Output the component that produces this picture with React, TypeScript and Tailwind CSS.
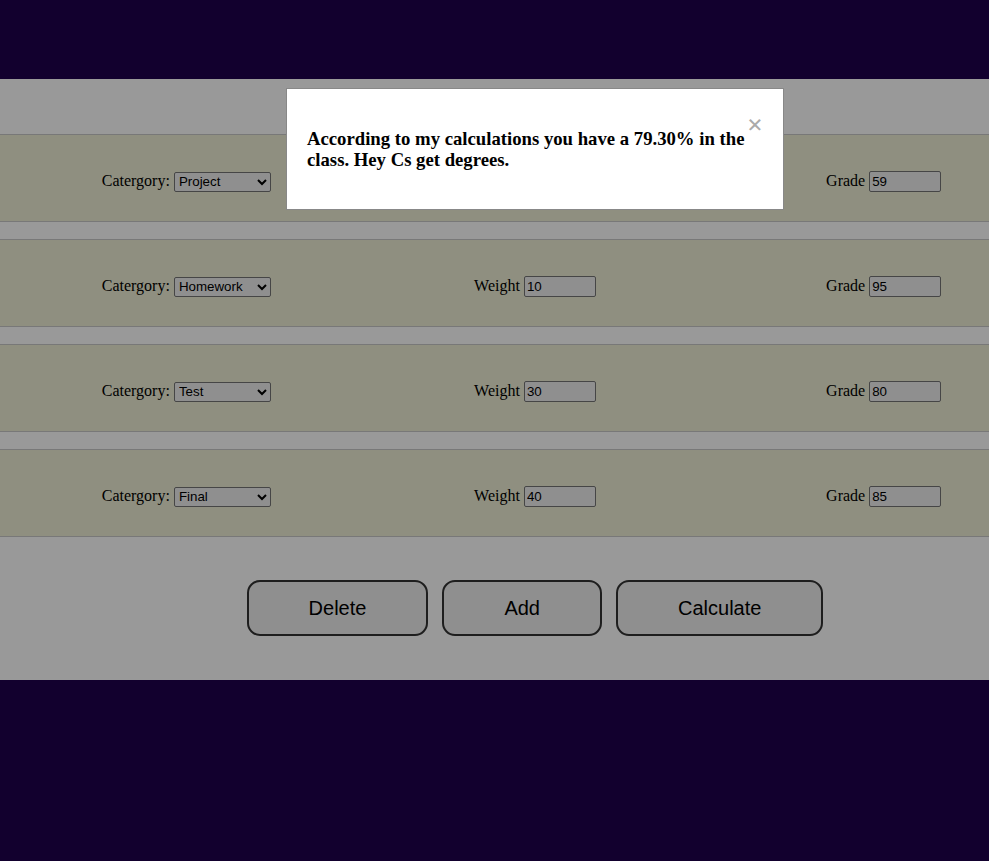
import { useState } from 'react';

type Row = { category: string; weight: string; grade: string };

const categories = ['Homework', 'Project', 'Test', 'Quiz', 'Final'];

const initialRows: Row[] = [
  { category: 'Project', weight: '20', grade: '59' },
  { category: 'Homework', weight: '10', grade: '95' },
  { category: 'Test', weight: '30', grade: '80' },
  { category: 'Final', weight: '40', grade: '85' },
];

function GradeRow({ row }: { row: Row }) {
  return (
    <div className="grid h-[88px] grid-cols-3 items-center border-y border-[#c8c8c8] bg-[#eeeed6] px-[12px] pt-[6px] font-['Liberation_Serif',serif] text-[16px] text-black">
      <div className="flex items-baseline justify-center gap-[4px]">
        <span>Catergory:</span>
        <select
          defaultValue={row.category}
          className="h-[20px] w-[97px] rounded-[2px] border border-[#767676] bg-[#efefef] font-['Liberation_Sans',sans-serif] text-[13.33px] text-black"
        >
          {categories.map((c) => (
            <option key={c}>{c}</option>
          ))}
        </select>
      </div>
      <div className="flex items-baseline justify-center gap-[4px]">
        <span>Weight</span>
        <input
          defaultValue={row.weight}
          className="h-[21px] w-[72px] rounded-[2px] border border-[#767676] bg-[#efefef] px-[2px] font-['Liberation_Sans',sans-serif] text-[13.33px] text-black"
        />
      </div>
      <div className="flex items-baseline justify-center gap-[4px]">
        <span>Grade</span>
        <input
          defaultValue={row.grade}
          className="h-[21px] w-[72px] rounded-[2px] border border-[#767676] bg-[#efefef] px-[2px] font-['Liberation_Sans',sans-serif] text-[13.33px] text-black"
        />
      </div>
    </div>
  );
}

export default function App() {
  const [rows] = useState(initialRows);
  const [open, setOpen] = useState(true);

  return (
    <div className="relative min-h-screen overflow-hidden bg-[#1f004d] pt-[79px]">
      {/* Calculator panel */}
      <div className="w-[1070px] bg-white pb-[44px] pt-[55px]">
        <div className="flex flex-col gap-[17px]">
          {rows.map((r, i) => (
            <GradeRow key={i} row={r} />
          ))}
        </div>
        <div className="mt-[43px] flex justify-center gap-[14px] font-['Liberation_Sans',sans-serif] text-[20px] text-black">
          <button className="h-[56px] rounded-[13px] border-2 border-[#333] bg-[#efefef] px-[60px]">Delete</button>
          <button className="h-[56px] rounded-[13px] border-2 border-[#333] bg-[#efefef] px-[60px]">Add</button>
          <button className="h-[56px] rounded-[13px] border-2 border-[#333] bg-[#efefef] px-[60px]">Calculate</button>
        </div>
      </div>

      {/* Result modal */}
      {open && (
        <div className="fixed inset-0 bg-black/40">
          <div className="ml-[286px] mt-[88px] w-[498px] border border-[#888] bg-white p-5 font-['Liberation_Serif',serif]">
            <span
              onClick={() => setOpen(false)}
              className="float-right cursor-pointer text-[28px] font-bold leading-[32px] text-[#aaa]"
            >
              ×
            </span>
            <h3 className="my-[18.72px] text-[18.72px] font-bold leading-[21.5px] text-black">
              According to my calculations you have a 79.30% in the class. Hey Cs get degrees.
            </h3>
          </div>
        </div>
      )}
    </div>
  );
}
